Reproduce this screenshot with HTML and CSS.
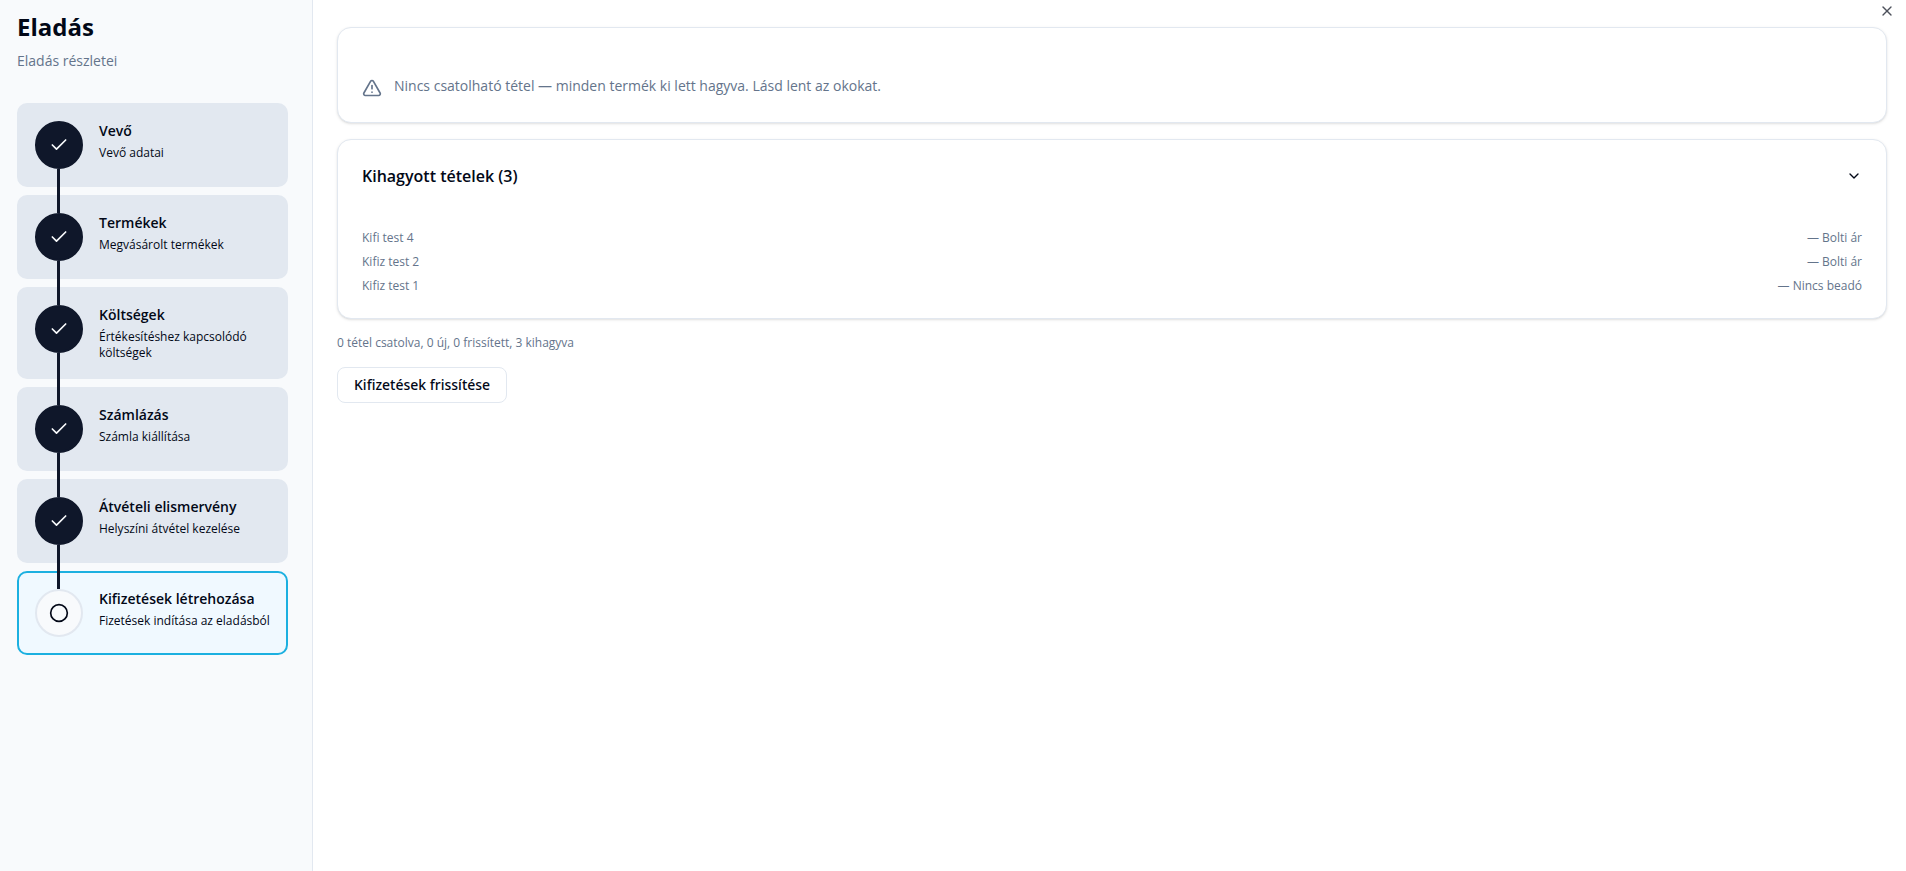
FILE: index.html
```html
<!DOCTYPE html>
<html lang="hu">
<head>
    <meta charset="UTF-8">
    <meta name="viewport" content="width=device-width, initial-scale=1.0">
    <title>Eladás</title>
    <link rel="stylesheet" href="styles.css">
</head>
<body>
    <svg class="sprite" aria-hidden="true">
        <symbol id="icon-check" viewBox="0 0 24 24"><path d="M20 6 9 17l-5-5"/></symbol>
        <symbol id="icon-circle" viewBox="0 0 24 24"><circle cx="12" cy="12" r="10"/></symbol>
    </svg>

    <div class="layout">
        <aside class="sidebar">
            <h1>Eladás</h1>
            <p class="subtitle">Eladás részletei</p>

            <ol class="steps">
                <li class="step done">
                    <span class="step-icon"><svg class="icon"><use href="#icon-check"/></svg></span>
                    <div class="step-text">
                        <h2>Vevő</h2>
                        <p>Vevő adatai</p>
                    </div>
                </li>
                <li class="step done">
                    <span class="step-icon"><svg class="icon"><use href="#icon-check"/></svg></span>
                    <div class="step-text">
                        <h2>Termékek</h2>
                        <p>Megvásárolt termékek</p>
                    </div>
                </li>
                <li class="step done">
                    <span class="step-icon"><svg class="icon"><use href="#icon-check"/></svg></span>
                    <div class="step-text">
                        <h2>Költségek</h2>
                        <p>Értékesítéshez kapcsolódó költségek</p>
                    </div>
                </li>
                <li class="step done">
                    <span class="step-icon"><svg class="icon"><use href="#icon-check"/></svg></span>
                    <div class="step-text">
                        <h2>Számlázás</h2>
                        <p>Számla kiállítása</p>
                    </div>
                </li>
                <li class="step done">
                    <span class="step-icon"><svg class="icon"><use href="#icon-check"/></svg></span>
                    <div class="step-text">
                        <h2>Átvételi elismervény</h2>
                        <p>Helyszíni átvétel kezelése</p>
                    </div>
                </li>
                <li class="step active">
                    <span class="step-icon"><svg class="icon"><use href="#icon-circle"/></svg></span>
                    <div class="step-text">
                        <h2>Kifizetések létrehozása</h2>
                        <p>Fizetések indítása az eladásból</p>
                    </div>
                </li>
            </ol>
        </aside>

        <main class="content">
            <section class="card notice">
                <svg class="icon" viewBox="0 0 24 24"><path d="m21.73 18-8-14a2 2 0 0 0-3.48 0l-8 14A2 2 0 0 0 4 21h16a2 2 0 0 0 1.73-3"/><path d="M12 9v4"/><path d="M12 17h.01"/></svg>
                <p>Nincs csatolható tétel — minden termék ki lett hagyva. Lásd lent az okokat.</p>
            </section>

            <section class="card">
                <button type="button" class="card-toggle" aria-expanded="true">
                    <span>Kihagyott tételek (3)</span>
                    <svg class="icon small" viewBox="0 0 24 24"><path d="m6 9 6 6 6-6"/></svg>
                </button>
                <ul class="skipped">
                    <li><span>Kifi test 4</span><span>— Bolti ár</span></li>
                    <li><span>Kifiz test 2</span><span>— Bolti ár</span></li>
                    <li><span>Kifiz test 1</span><span>— Nincs beadó</span></li>
                </ul>
            </section>

            <p class="summary">0 tétel csatolva, 0 új, 0 frissített, 3 kihagyva</p>

            <button type="button" class="button">Kifizetések frissítése</button>
        </main>
    </div>

    <button type="button" class="close" aria-label="Bezárás">
        <svg class="icon small" viewBox="0 0 24 24"><path d="M18 6 6 18"/><path d="m6 6 12 12"/></svg>
    </button>
</body>
</html>
```
FILE: styles.css
```css
* {
    box-sizing: border-box;
}

body {
    margin: 0;
    font-family: "Open Sans", "Noto Sans", sans-serif;
    font-size: 14px;
    line-height: 20px;
    color: #020817;
    background-color: white;
}

h1, h2, p, ul, ol {
    margin: 0;
    padding: 0;
}

ul, ol {
    list-style: none;
}

button {
    font-family: inherit;
    color: inherit;
    cursor: pointer;
}

.sprite {
    display: none;
}

.icon {
    display: block;
    flex-shrink: 0;
    width: 20px;
    height: 20px;
    fill: none;
    stroke: currentColor;
    stroke-width: 2;
    stroke-linecap: round;
    stroke-linejoin: round;
}

.icon.small {
    width: 16px;
    height: 16px;
}

.layout {
    display: flex;
    min-height: 100vh;
}

/* Sidebar */
.sidebar {
    flex-shrink: 0;
    width: 313px;
    padding: 11px 24px 16px 17px;
    background-color: #f8fafc;
    border-right: 1px solid #e2e8f0;
}

h1 {
    font-size: 24px;
    line-height: 32px;
    font-weight: 700;
}

.subtitle {
    margin-top: 8px;
    color: #64748b;
}

.steps {
    display: flex;
    flex-direction: column;
    gap: 8px;
    margin-top: 32px;
}

.step {
    position: relative;
    display: flex;
    gap: 16px;
    padding: 16px;
    border: 2px solid #e2e8f0;
    border-radius: 10px;
    background-color: #e2e8f0;
}

.step.active {
    border-color: #1cb0e0;
    background-color: #f0f9ff;
}

.step-icon {
    position: relative;
    z-index: 2;
    display: flex;
    align-items: center;
    justify-content: center;
    flex-shrink: 0;
    width: 48px;
    height: 48px;
    border: 2px solid #e2e8f0;
    border-radius: 50%;
    background-color: #f8fafc;
}

.step.done .step-icon {
    border-color: #0f172a;
    background-color: #0f172a;
    color: #f8fafc;
}

/* line down to the next step's circle */
.step.done::after {
    content: "";
    position: absolute;
    z-index: 1;
    top: 64px;
    bottom: -28px;
    left: 38px;
    width: 3px;
    background-color: #0f172a;
}

.step-text {
    min-width: 0;
}

.step-text h2 {
    font-size: 14px;
    line-height: 20px;
    font-weight: 600;
}

.step-text p {
    margin-top: 4px;
    margin-right: -4px;
    font-size: 12px;
    line-height: 16px;
}

/* Content */
.content {
    flex: 1;
    display: flex;
    flex-direction: column;
    gap: 16px;
    min-width: 0;
    padding: 27px 19px 24px 24px;
}

.card {
    padding: 24px;
    border: 1px solid #e2e8f0;
    border-radius: 14px;
    background-color: white;
    box-shadow: 0 1px 3px rgba(0, 0, 0, 0.1), 0 1px 2px -1px rgba(0, 0, 0, 0.1);
}

.notice {
    display: flex;
    align-items: flex-end;
    gap: 12px;
    padding-top: 48px;
    color: #64748b;
}

.notice p {
    padding-bottom: 2px;
}

.card-toggle {
    display: flex;
    align-items: center;
    justify-content: space-between;
    width: 100%;
    padding: 0;
    border: none;
    background: none;
    font-size: 16px;
    line-height: 24px;
    font-weight: 600;
}

.skipped {
    display: flex;
    flex-direction: column;
    gap: 8px;
    margin-top: 42px;
    font-size: 12px;
    line-height: 16px;
    color: #64748b;
}

.skipped li {
    display: flex;
    justify-content: space-between;
}

.summary {
    font-size: 12px;
    line-height: 16px;
    color: #64748b;
}

.button {
    align-self: flex-start;
    height: 36px;
    padding: 0 16px;
    border: 1px solid #e2e8f0;
    border-radius: 8px;
    background-color: white;
    font-family: "Noto Sans", sans-serif;
    font-size: 14px;
    line-height: 20px;
    font-weight: 500;
}

.close {
    position: absolute;
    top: 3px;
    right: 11px;
    padding: 0;
    border: none;
    background: none;
    opacity: 0.7;
}
```
